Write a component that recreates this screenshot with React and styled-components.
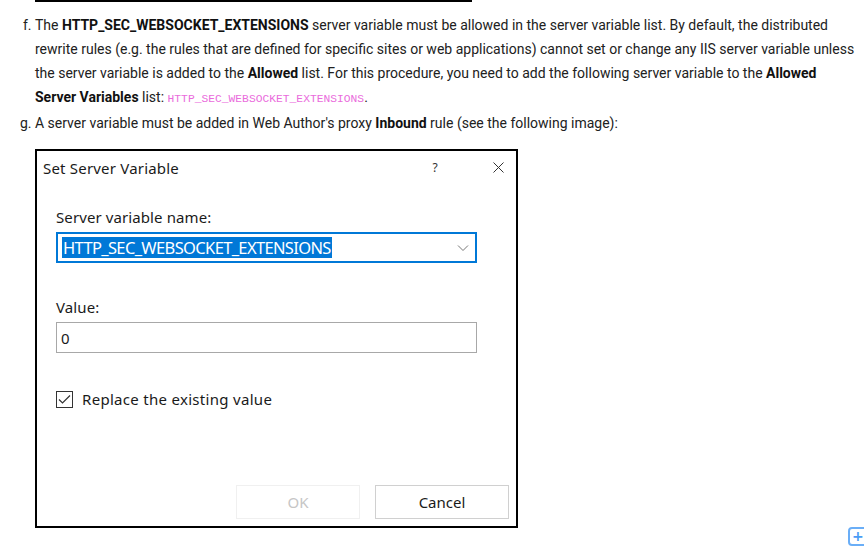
import React from 'react';
import styled, { createGlobalStyle } from 'styled-components';

const GlobalStyle = createGlobalStyle`
  html, body {
    margin: 0;
    padding: 0;
    background: #fff;
  }
  body {
    width: 864px;
    height: 549px;
    overflow: hidden;
    position: relative;
  }
`;

const Page = styled.div`
  position: relative;
  height: 549px;
  font-family: Roboto, 'Liberation Sans', sans-serif;
  color: #212121;
`;

const Rule = styled.div`
  width: 437px;
  height: 2px;
  margin-left: 35px;
  background: #000;
`;

const Steps = styled.ol`
  list-style-type: lower-alpha;
  margin: 11px 0 0 0;
  padding-left: 35px;
  width: 825px;
  font-size: 14px;
  line-height: 24px;

  li::marker {
    color: #212121;
  }

  b {
    font-weight: 700;
    color: #111;
  }
`;

const Code = styled.code`
  font-family: 'Liberation Mono', 'DejaVu Sans Mono', monospace;
  font-size: 11.3px;
  color: #ea6bdc;
`;

const Dialog = styled.div`
  box-sizing: border-box;
  width: 483px;
  height: 379px;
  margin: 14px 0 0 35px;
  border: 2px solid #000;
  background: #fff;
  font-family: 'Noto Sans', 'Open Sans', sans-serif;
  color: #1a1a1a;
  display: flex;
  flex-direction: column;
`;

const TitleBar = styled.div`
  display: flex;
  align-items: center;
  gap: 27px;
  height: 33px;
  padding: 0 0 0 6px;
  font-size: 15px;
`;

const Title = styled.span`
  flex: 1;
  letter-spacing: 0.2px;
`;

const TitleButton = styled.span`
  width: 36px;
  display: flex;
  justify-content: center;
  font-size: ${(p) => p.$size || 12}px;
  color: #333;
`;

const Body = styled.div`
  flex: 1;
  padding: 23px 39px 0 19px;
  display: flex;
  flex-direction: column;
`;

const Label = styled.div`
  font-size: 15px;
  line-height: 20px;
  letter-spacing: 0.1px;
  margin: ${(p) => p.$top || 0}px 0 5px 0;
`;

const Field = styled.div`
  box-sizing: border-box;
  height: 31px;
  display: flex;
  align-items: center;
  padding: 0 4px;
  border: ${(p) => (p.$focused ? '2px solid #0078d7' : '1px solid #a8a8a8')};
  font-size: 15px;
`;

const Selected = styled.span`
  background: #0078d7;
  color: #fff;
  font-size: 16.5px;
  line-height: 21px;
  letter-spacing: -0.65px;
  padding: 0 1px;
`;

const Chevron = styled.svg`
  margin-left: auto;
  margin-right: 2px;
`;

const CheckRow = styled.label`
  display: flex;
  align-items: center;
  gap: 9px;
  margin-top: 36px;
  font-size: 15px;
  letter-spacing: 0.3px;
`;

const Box = styled.span`
  box-sizing: border-box;
  width: 17px;
  height: 17px;
  border: 1px solid #333;
  display: flex;
  align-items: center;
  justify-content: center;
`;

const Footer = styled.div`
  display: flex;
  justify-content: flex-end;
  gap: 15px;
  padding: 0 7px 7px 0;
`;

const Button = styled.div`
  box-sizing: border-box;
  width: ${(p) => p.$width}px;
  height: 34px;
  display: flex;
  align-items: center;
  justify-content: center;
  font-size: 15px;
  border: 1px solid ${(p) => (p.$disabled ? '#f0f0f0' : '#d0d0d0')};
  color: ${(p) => (p.$disabled ? '#c6c6c6' : '#1a1a1a')};
  background: #fff;
`;

const FloatButton = styled.div`
  position: absolute;
  left: 848px;
  top: 527px;
  box-sizing: border-box;
  width: 20px;
  height: 19px;
  border: 2px solid #6aaef7;
  border-radius: 4px;
  color: #4a9cf5;
  font-family: 'DejaVu Sans', sans-serif;
  font-weight: 700;
  font-size: 14px;
  line-height: 14px;
  padding-left: 2px;
  background: #fff;
`;

export default function App() {
  return (
    <Page>
      <GlobalStyle />
      <Rule />
      <Steps start={6}>
        <li>
          The <b>HTTP_SEC_WEBSOCKET_EXTENSIONS</b> server variable must be allowed in the server
          variable list. By default, the distributed rewrite rules (e.g. the rules that are defined
          for specific sites or web applications) cannot set or change any IIS server variable unless
          the server variable is added to the <b>Allowed</b> list. For this procedure, you need to add
          the following server variable to the <b>Allowed Server Variables</b> list:{' '}
          <Code>HTTP_SEC_WEBSOCKET_EXTENSIONS</Code>.
        </li>
        <li>
          A server variable must be added in Web Author's proxy <b>Inbound</b> rule (see the
          following image):
        </li>
      </Steps>
      <Dialog>
        <TitleBar>
          <Title>Set Server Variable</Title>
          <TitleButton $size={12}>?</TitleButton>
          <TitleButton $size={16}>
            <svg width="11" height="11" viewBox="0 0 11 11">
              <path d="M0.5 0.5 L10.5 10.5 M10.5 0.5 L0.5 10.5" stroke="#333" strokeWidth="1" />
            </svg>
          </TitleButton>
        </TitleBar>
        <Body>
          <Label>Server variable name:</Label>
          <Field $focused>
            <Selected>HTTP_SEC_WEBSOCKET_EXTENSIONS</Selected>
            <Chevron width="12" height="8" viewBox="0 0 12 8">
              <path d="M1 1.5 L6 6.5 L11 1.5" fill="none" stroke="#777" strokeWidth="1" />
            </Chevron>
          </Field>
          <Label $top={34}>Value:</Label>
          <Field>0</Field>
          <CheckRow>
            <Box>
              <svg width="13" height="11" viewBox="0 0 13 11">
                <path d="M1 5.5 L4.5 9 L12 1.5" fill="none" stroke="#333" strokeWidth="1.2" />
              </svg>
            </Box>
            Replace the existing value
          </CheckRow>
        </Body>
        <Footer>
          <Button $width={124} $disabled>OK</Button>
          <Button $width={134}>Cancel</Button>
        </Footer>
      </Dialog>
      <FloatButton>+</FloatButton>
    </Page>
  );
}
